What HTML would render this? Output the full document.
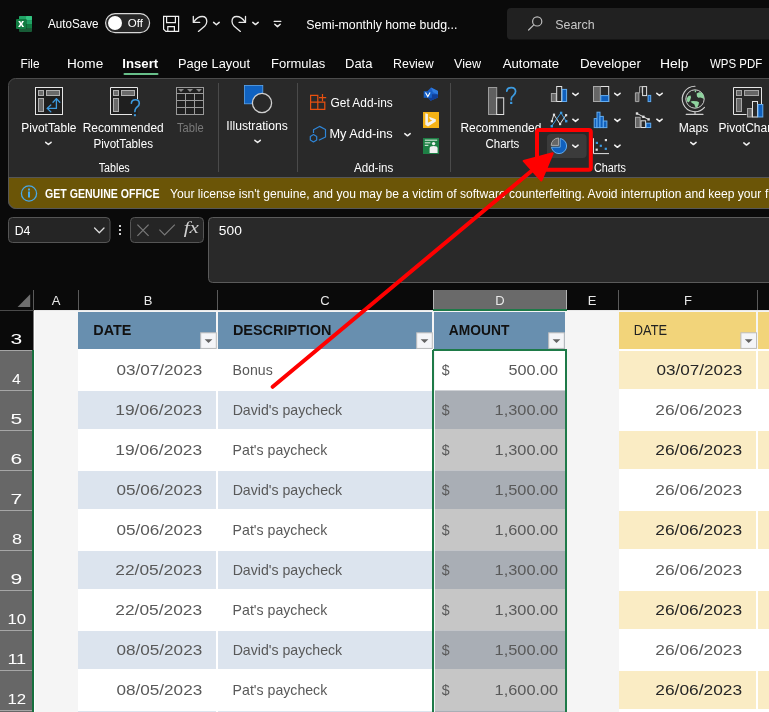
<!DOCTYPE html>
<html><head><meta charset="utf-8"><style>html,body{margin:0;padding:0;width:769px;height:712px;overflow:hidden;background:#0a0a0a}svg{display:block;will-change:transform}</style></head><body>
<svg width="769" height="712" viewBox="0 0 769 712">
<rect x="0" y="0" width="769" height="712" fill="#0a0a0a" />
<g>
<rect x="19" y="16" width="13" height="16" rx="1" fill="#185c37"/>
<rect x="19" y="16" width="13" height="4.3" rx="1" fill="#21a366"/>
<rect x="26" y="16" width="6" height="4.3" rx="1" fill="#33c481"/>
<rect x="19" y="20.2" width="13" height="4" fill="#21a366"/>
<rect x="19" y="24.1" width="13" height="4" fill="#107c41"/>
<rect x="16" y="18.9" width="10.8" height="10.2" rx="1" fill="#0b0b0b" opacity="0.35"/>
<rect x="16" y="18.9" width="10.2" height="10" rx="1" fill="#107c41"/>
<path d="M18.2 21H20.2L21.1 22.9L22 21H24L22.2 23.9L24.1 26.9H22.1L21.1 24.9L20.1 26.9H18.1L20 23.9Z" fill="#fff"/>
</g>
<text x="48.00" y="28" font-family="Liberation Sans" font-size="13" font-weight="normal" font-style="normal" fill="#ffffff" textLength="50.54" lengthAdjust="spacingAndGlyphs" xml:space="preserve">AutoSave</text>
<rect x="105.6" y="13.6" width="44" height="19" rx="9.5" fill="#262626" stroke="#d8d8d8" stroke-width="1.2"/>
<circle cx="115" cy="23" r="7" fill="#ffffff"/>
<text x="127.70" y="26.8" font-family="Liberation Sans" font-size="11" font-weight="normal" font-style="normal" fill="#ffffff" textLength="15.16" lengthAdjust="spacingAndGlyphs" xml:space="preserve">Off</text>
<g fill="none" stroke="#f0f0f0" stroke-width="1.2">
<path d="M163.6 16.4H178.6V31.4H165.8L163.6 29.2Z"/><path d="M166.6 16.4V22.6H175.4V16.4"/><path d="M167.8 31.4V26.6H174.4V31.4"/></g>
<g fill="none" stroke="#e8e8e8" stroke-width="1.3" stroke-linecap="round" stroke-linejoin="round">
<path d="M193.3 16.3V22.4H199.7"/><path d="M193.6 22.1C196 18.6 199.3 16.5 202.2 16.5C205 16.5 206.8 18.6 206.8 21.5C206.8 23.5 205.9 24.9 204.6 26.2L198.4 31.4"/>
<path d="M213.6 22.4L216.4 24.8L219.2 22.4" stroke-width="1.5"/>
<g transform="translate(438.8,0) scale(-1,1)"><path d="M193.3 16.3V22.4H199.7"/><path d="M193.6 22.1C196 18.6 199.3 16.5 202.2 16.5C205 16.5 206.8 18.6 206.8 21.5C206.8 23.5 205.9 24.9 204.6 26.2L198.4 31.4"/></g>
<path d="M252.8 22.4L255.5 24.6L258.2 22.4" stroke-width="1.5"/>
<path d="M274.2 21.4H280.8"/><path d="M274.8 24.2L277.5 26.6L280.2 24.2" stroke-width="1.5"/>
</g>
<text x="306.35" y="29" font-family="Liberation Sans" font-size="13" font-weight="normal" font-style="normal" fill="#ffffff" textLength="150.97" lengthAdjust="spacingAndGlyphs" xml:space="preserve">Semi-monthly home budg...</text>
<rect x="507" y="8" width="280" height="31.6" rx="4" fill="#212121"/>
<g fill="none" stroke="#bdbdbd" stroke-width="1.2" stroke-linecap="round"><circle cx="537.2" cy="21.4" r="4.6"/><path d="M533.8 24.8L528.6 30"/></g>
<text x="555.25" y="29" font-family="Liberation Sans" font-size="13" font-weight="normal" font-style="normal" fill="#c8c8c8" textLength="39.35" lengthAdjust="spacingAndGlyphs" xml:space="preserve">Search</text>
<text x="20.49" y="67.8" font-family="Liberation Sans" font-size="13" font-weight="normal" font-style="normal" fill="#ffffff" textLength="19.07" lengthAdjust="spacingAndGlyphs" xml:space="preserve">File</text>
<text x="66.95" y="67.8" font-family="Liberation Sans" font-size="13" font-weight="normal" font-style="normal" fill="#ffffff" textLength="36.26" lengthAdjust="spacingAndGlyphs" xml:space="preserve">Home</text>
<text x="122.29" y="67.8" font-family="Liberation Sans" font-size="13" font-weight="bold" font-style="normal" fill="#ffffff" textLength="35.93" lengthAdjust="spacingAndGlyphs" xml:space="preserve">Insert</text>
<text x="178.01" y="67.8" font-family="Liberation Sans" font-size="13" font-weight="normal" font-style="normal" fill="#ffffff" textLength="72.00" lengthAdjust="spacingAndGlyphs" xml:space="preserve">Page Layout</text>
<text x="271.00" y="67.8" font-family="Liberation Sans" font-size="13" font-weight="normal" font-style="normal" fill="#ffffff" textLength="54.19" lengthAdjust="spacingAndGlyphs" xml:space="preserve">Formulas</text>
<text x="345.00" y="67.8" font-family="Liberation Sans" font-size="13" font-weight="normal" font-style="normal" fill="#ffffff" textLength="27.47" lengthAdjust="spacingAndGlyphs" xml:space="preserve">Data</text>
<text x="393.05" y="67.8" font-family="Liberation Sans" font-size="13" font-weight="normal" font-style="normal" fill="#ffffff" textLength="40.60" lengthAdjust="spacingAndGlyphs" xml:space="preserve">Review</text>
<text x="454.00" y="67.8" font-family="Liberation Sans" font-size="13" font-weight="normal" font-style="normal" fill="#ffffff" textLength="26.95" lengthAdjust="spacingAndGlyphs" xml:space="preserve">View</text>
<text x="502.80" y="67.8" font-family="Liberation Sans" font-size="13" font-weight="normal" font-style="normal" fill="#ffffff" textLength="56.26" lengthAdjust="spacingAndGlyphs" xml:space="preserve">Automate</text>
<text x="579.97" y="67.8" font-family="Liberation Sans" font-size="13" font-weight="normal" font-style="normal" fill="#ffffff" textLength="60.90" lengthAdjust="spacingAndGlyphs" xml:space="preserve">Developer</text>
<text x="659.93" y="67.8" font-family="Liberation Sans" font-size="13" font-weight="normal" font-style="normal" fill="#ffffff" textLength="28.68" lengthAdjust="spacingAndGlyphs" xml:space="preserve">Help</text>
<text x="710.00" y="67.8" font-family="Liberation Sans" font-size="13" font-weight="normal" font-style="normal" fill="#ffffff" textLength="52.21" lengthAdjust="spacingAndGlyphs" xml:space="preserve">WPS PDF</text>
<rect x="123.5" y="73" width="35" height="2" rx="1" fill="#68c08a"/>
<rect x="8.5" y="78.5" width="800" height="130" rx="7" fill="#292929" stroke="#4c4c4c" stroke-width="1"/>
<path d="M8.5 177.5H800V208.5H16.5A8 8 0 0 1 8.5 200.5Z" fill="#6b5507" stroke="#565656" stroke-width="1"/>
<rect x="218.0" y="83" width="1" height="89" fill="#4a4a4a" />
<rect x="297.0" y="83" width="1" height="89" fill="#4a4a4a" />
<rect x="450.0" y="83" width="1" height="89" fill="#4a4a4a" />
<g transform="translate(35,87)"><rect x="0.5" y="0.5" width="27" height="27" fill="#1f1f1f" stroke="#e6e6e6" stroke-width="1"/><rect x="3.5" y="3.5" width="5" height="5" fill="#6a6a6a" stroke="#b0b0b0" stroke-width="1"/><rect x="11.5" y="3.5" width="13" height="5" fill="#6a6a6a" stroke="#b0b0b0" stroke-width="1"/><rect x="3.5" y="11.5" width="5" height="13" fill="#6a6a6a" stroke="#b0b0b0" stroke-width="1"/></g>
<g fill="none" stroke="#3d9be0" stroke-width="1.3" stroke-linecap="round" stroke-linejoin="round"><path d="M56.4 99V108.4H47.4"/><path d="M53 102.2L56.4 98.6L59.8 102.2"/><path d="M50.8 105L47.2 108.4L50.8 111.8"/></g>
<g transform="translate(110,87)"><rect x="0.5" y="0.5" width="27" height="27" fill="#1f1f1f"/><path d="M22 27.5H0.5V0.5H27.5V12" fill="none" stroke="#e6e6e6" stroke-width="1"/><rect x="3.5" y="3.5" width="5" height="5" fill="#6a6a6a" stroke="#b0b0b0" stroke-width="1"/><rect x="11.5" y="3.5" width="13" height="5" fill="#6a6a6a" stroke="#b0b0b0" stroke-width="1"/><rect x="3.5" y="11.5" width="5" height="13" fill="#6a6a6a" stroke="#b0b0b0" stroke-width="1"/></g>
<g fill="none" stroke="#3d9be0" stroke-width="1.6" stroke-linecap="round"><path d="M131.4 103.2C131.6 100.8 133.4 99.8 135.4 99.8C137.8 99.8 139.3 101.4 139.3 103.4C139.3 105.8 137.2 106.6 135.9 108.2C135.2 109 134.9 110 134.9 111.6"/></g><rect x="133.9" y="114.2" width="2" height="2" fill="#3d9be0"/>
<g fill="none" stroke="#9a9a9a" stroke-width="1">
<rect x="176.5" y="87.5" width="27" height="27" fill="#1f1f1f"/>
<path d="M176.5 93.5H203.5M176.5 100.5H203.5M176.5 107.5H203.5M185.5 93.5V114.5M194.5 93.5V114.5"/></g>
<g fill="#8a8a8a"><path d="M178 89H184L181 92Z"/><path d="M187 89H193L190 92Z"/><path d="M196 89H202L199 92Z"/></g>
<text x="21.30" y="132" font-family="Liberation Sans" font-size="12" font-weight="normal" font-style="normal" fill="#ffffff" textLength="55.17" lengthAdjust="spacingAndGlyphs" xml:space="preserve">PivotTable</text>
<text x="82.70" y="132" font-family="Liberation Sans" font-size="12" font-weight="normal" font-style="normal" fill="#ffffff" textLength="80.97" lengthAdjust="spacingAndGlyphs" xml:space="preserve">Recommended</text>
<text x="93.53" y="147.6" font-family="Liberation Sans" font-size="12" font-weight="normal" font-style="normal" fill="#ffffff" textLength="59.43" lengthAdjust="spacingAndGlyphs" xml:space="preserve">PivotTables</text>
<text x="177.00" y="132" font-family="Liberation Sans" font-size="12" font-weight="normal" font-style="normal" fill="#7a7a7a" textLength="26.64" lengthAdjust="spacingAndGlyphs" xml:space="preserve">Table</text>
<text x="98.70" y="171.8" font-family="Liberation Sans" font-size="12" font-weight="normal" font-style="normal" fill="#ffffff" textLength="31.02" lengthAdjust="spacingAndGlyphs" xml:space="preserve">Tables</text>
<path d="M45.70 142.30L48.40 144.50L51.10 142.30" fill="none" stroke="#f0f0f0" stroke-width="1.5" stroke-linecap="round" stroke-linejoin="round"/>
<rect x="244.4" y="85.4" width="18.4" height="18.4" fill="#1062c0" stroke="#5aa5ee" stroke-width="0.8"/>
<circle cx="262" cy="103" r="9.6" fill="#292929" stroke="#d0d0d0" stroke-width="1.3"/>
<text x="226.39" y="129.9" font-family="Liberation Sans" font-size="12" font-weight="normal" font-style="normal" fill="#ffffff" textLength="61.41" lengthAdjust="spacingAndGlyphs" xml:space="preserve">Illustrations</text>
<path d="M254.90 140.30L257.60 142.50L260.30 140.30" fill="none" stroke="#f0f0f0" stroke-width="1.5" stroke-linecap="round" stroke-linejoin="round"/>
<g fill="none" stroke="#e8500f" stroke-width="1.2">
<path d="M310.6 95.4H317.8V109.4H310.6Z"/><path d="M310.6 102.2H324.8V109.4H317.8"/>
<path d="M322.5 94V101.2M319 97.6H326.2"/></g>
<text x="330.50" y="107.2" font-family="Liberation Sans" font-size="12" font-weight="normal" font-style="normal" fill="#ffffff" textLength="62.21" lengthAdjust="spacingAndGlyphs" xml:space="preserve">Get Add-ins</text>
<g fill="none" stroke="#2f86d8" stroke-width="1.2" stroke-linejoin="round">
<path d="M313.5 133V129.8L319.5 126.4L325.5 129.5V137L318.8 140.3"/>
<path d="M313.5 134.6L316.7 136.4V140.1L313.5 141.9L310.3 140.1V136.4Z"/></g>
<text x="329.43" y="138.4" font-family="Liberation Sans" font-size="12" font-weight="normal" font-style="normal" fill="#ffffff" textLength="63.25" lengthAdjust="spacingAndGlyphs" xml:space="preserve">My Add-ins</text>
<path d="M404.80 133.60L407.50 135.80L410.20 133.60" fill="none" stroke="#f0f0f0" stroke-width="1.5" stroke-linecap="round" stroke-linejoin="round"/>
<g><path d="M431 87.6L438 91V97.5L430.6 100.8L427.6 97.2V91Z" fill="#1c5fc8"/>
<path d="M427.6 94.2H438V97.5L430.6 100.8L427.6 97.2Z" fill="#103f98"/>
<path d="M431 87.6L438 91V94.4L433 92.2Z" fill="#2f7ce0"/>
<rect x="423.7" y="91.2" width="8.2" height="6.6" fill="#1660c8"/>
<path d="M425.5 92.6L427.8 96.6L430.1 92.6" fill="none" stroke="#fff" stroke-width="1.1"/></g>
<rect x="423" y="112" width="16" height="16" fill="#f4b216"/>
<path d="M425.3 113.2L427.9 114.1V122.8L432.2 120.4L430.2 119.5L429 116.8L435.8 119.2V121.6L428 126.4L425.3 124.8Z" fill="#f2f0ea"/>
<rect x="423" y="138" width="16" height="16" fill="#1e7f45"/>
<g fill="#c8e0cf"><rect x="424.8" y="139.6" width="12.4" height="1.2"/><rect x="424.8" y="142.2" width="5.6" height="1.2"/><rect x="424.8" y="144.8" width="3.6" height="1.2"/></g>
<g fill="#f0f0f0"><circle cx="433.6" cy="143.6" r="1.7"/><path d="M429.6 153V148.4C429.6 146.9 431 146.1 433.6 146.1C436.2 146.1 437.6 146.9 437.6 148.4V153Z"/></g>
<text x="354.00" y="171.8" font-family="Liberation Sans" font-size="12" font-weight="normal" font-style="normal" fill="#ffffff" textLength="39.30" lengthAdjust="spacingAndGlyphs" xml:space="preserve">Add-ins</text>
<rect x="488.5" y="87.5" width="8.2" height="27" fill="#606060" stroke="#9c9c9c" stroke-width="1"/>
<rect x="496.7" y="97.8" width="7" height="16.7" fill="#292929" stroke="#e0e0e0" stroke-width="1"/>
<g fill="none" stroke="#3d9be0" stroke-width="1.7" stroke-linecap="round"><path d="M506.8 91.2C507 88.8 508.8 87.6 511.2 87.6C513.9 87.6 515.6 89.2 515.6 91.6C515.6 94.2 513.4 95.2 512.2 96.6C511.6 97.4 511.2 98.4 511.2 99.8"/></g><rect x="510.1" y="101.8" width="2.2" height="2.2" fill="#3d9be0"/>
<text x="460.40" y="131.8" font-family="Liberation Sans" font-size="12" font-weight="normal" font-style="normal" fill="#ffffff" textLength="80.97" lengthAdjust="spacingAndGlyphs" xml:space="preserve">Recommended</text>
<text x="485.50" y="148" font-family="Liberation Sans" font-size="12" font-weight="normal" font-style="normal" fill="#ffffff" textLength="33.83" lengthAdjust="spacingAndGlyphs" xml:space="preserve">Charts</text>
<rect x="547" y="134" width="39.6" height="24" rx="4" fill="#3b3b3b"/>
<g stroke-width="1">
<rect x="551.4" y="93.5" width="4.8" height="8" fill="#666" stroke="#a8a8a8"/>
<rect x="556.7" y="86.5" width="5" height="15" fill="#292929" stroke="#e2e2e2"/>
<rect x="562.2" y="89.4" width="4.4" height="12.1" fill="#1060bd" stroke="#62acf0"/></g>
<g stroke-width="1">
<rect x="593.5" y="86.5" width="15.2" height="15" fill="#292929" stroke="#e2e2e2"/>
<rect x="593.5" y="86.5" width="6.8" height="15" fill="#666" stroke="#a8a8a8"/>
<rect x="600.8" y="95.6" width="7.9" height="5.9" fill="#1060bd" stroke="#62acf0"/></g>
<g stroke-width="1">
<path d="M635.4 101.6V92.8H638.9V101.6Z" fill="#666" stroke="#a8a8a8"/>
<path d="M638.9 92.8H639.6V86.6H642.2V92.8" fill="none" stroke="#a8a8a8"/>
<rect x="642.6" y="86.6" width="4" height="9" fill="#292929" stroke="#e2e2e2"/>
<rect x="648.1" y="95.4" width="2.6" height="6.2" fill="#1060bd" stroke="#62acf0"/></g>
<g fill="none" stroke-width="1" stroke-linejoin="round">
<path d="M551.8 121.1L553.9 114.6L560 124L566 115.1" stroke="#e2e2e2"/>
<path d="M551.8 126L561 112.8L566 121.1" stroke="#3d9be0"/></g>
<g fill="#e2e2e2"><rect x="550.8" y="120.1" width="2.2" height="2.2"/><rect x="552.9" y="113.6" width="2.2" height="2.2"/><rect x="559" y="123" width="2.2" height="2.2"/><rect x="565" y="114.1" width="2.2" height="2.2"/></g>
<g fill="#3d9be0"><rect x="550.6" y="125" width="2.4" height="2.4"/><rect x="559.9" y="111.7" width="2.4" height="2.4"/><rect x="565" y="120" width="2.4" height="2.4"/></g>
<g stroke-width="1" fill="#1060bd" stroke="#62acf0">
<rect x="594.2" y="118.6" width="2.8" height="9"/><rect x="597" y="112.2" width="3" height="15.4"/><rect x="600" y="116.4" width="3.3" height="11.2"/><rect x="603.3" y="121" width="3.6" height="6.6"/></g>
<g stroke-width="1">
<rect x="635.5" y="117.3" width="4.6" height="10.2" fill="#666" stroke="#a8a8a8"/>
<rect x="641" y="120.8" width="4.6" height="6.7" fill="#292929" stroke="#e2e2e2"/>
<rect x="646.3" y="123.2" width="4.4" height="4.3" fill="#1060bd" stroke="#62acf0"/>
<path d="M637 113.5L643.4 116.8L648.6 119.4" fill="none" stroke="#e2e2e2" stroke-width="1"/>
<rect x="635.8" y="112.3" width="2.4" height="2.4" fill="#e2e2e2" stroke="none"/><rect x="642.2" y="115.6" width="2.4" height="2.4" fill="#e2e2e2" stroke="none"/><rect x="647.4" y="118.2" width="2.4" height="2.4" fill="#e2e2e2" stroke="none"/></g>
<defs><clipPath id="pc"><path d="M540 130H580V160H540V147.2H560.2V130Z"/></clipPath></defs>
<circle cx="559" cy="146" r="7.6" fill="#1060bd" stroke="#62acf0" stroke-width="1" clip-path="url(#pc)"/>
<path d="M560.2 138.4V147.2H551.4" fill="none" stroke="#62acf0" stroke-width="1"/>
<path d="M558.6 138A7.4 7.4 0 0 0 551.2 145.4H558.6Z" fill="#666" stroke="#a8a8a8" stroke-width="1"/>
<g><path d="M593.5 138.2V153.6H609" fill="none" stroke="#e2e2e2" stroke-width="1"/>
<rect x="604.8" y="139" width="2.2" height="2.2" fill="#e2e2e2"/><rect x="595.6" y="148.6" width="2.2" height="2.2" fill="#e2e2e2"/>
<rect x="595.8" y="141.8" width="2.2" height="2.2" fill="#3d9be0"/><rect x="599.7" y="144.7" width="2.2" height="2.2" fill="#3d9be0"/><rect x="604.7" y="147.7" width="2.2" height="2.2" fill="#3d9be0"/></g>
<path d="M572.80 93.30L575.50 95.50L578.20 93.30" fill="none" stroke="#f0f0f0" stroke-width="1.5" stroke-linecap="round" stroke-linejoin="round"/>
<path d="M572.80 119.20L575.50 121.40L578.20 119.20" fill="none" stroke="#f0f0f0" stroke-width="1.5" stroke-linecap="round" stroke-linejoin="round"/>
<path d="M614.70 93.30L617.40 95.50L620.10 93.30" fill="none" stroke="#f0f0f0" stroke-width="1.5" stroke-linecap="round" stroke-linejoin="round"/>
<path d="M614.70 119.20L617.40 121.40L620.10 119.20" fill="none" stroke="#f0f0f0" stroke-width="1.5" stroke-linecap="round" stroke-linejoin="round"/>
<path d="M656.80 93.30L659.50 95.50L662.20 93.30" fill="none" stroke="#f0f0f0" stroke-width="1.5" stroke-linecap="round" stroke-linejoin="round"/>
<path d="M656.80 119.20L659.50 121.40L662.20 119.20" fill="none" stroke="#f0f0f0" stroke-width="1.5" stroke-linecap="round" stroke-linejoin="round"/>
<path d="M572.70 145.10L575.40 147.30L578.10 145.10" fill="none" stroke="#f0f0f0" stroke-width="1.5" stroke-linecap="round" stroke-linejoin="round"/>
<path d="M614.70 145.10L617.40 147.30L620.10 145.10" fill="none" stroke="#f0f0f0" stroke-width="1.5" stroke-linecap="round" stroke-linejoin="round"/>
<text x="594.00" y="171.8" font-family="Liberation Sans" font-size="12" font-weight="normal" font-style="normal" fill="#ffffff" textLength="31.81" lengthAdjust="spacingAndGlyphs" xml:space="preserve">Charts</text>
<g fill="none" stroke="#d0d0d0" stroke-width="1.1" stroke-linecap="round">
<path d="M695 86.3A12.7 12.7 0 1 0 704.5 107.4"/>
<path d="M695 111.8V114.4M686.2 114.4H703"/></g>
<circle cx="695" cy="99" r="9.2" fill="#2a2a2a" stroke="#d0d0d0" stroke-width="1"/>
<g fill="#8fd39f"><path d="M686.6 98.5L688.5 96L690.6 95.4L691 97.5L690 100.5L689 102L687.8 102.6C687 101.4 686.6 100 686.6 98.5Z"/>
<path d="M696.6 93.6L699 92.2L701.5 92.6L703.2 94.5L704 97L703.8 99L702 98L700.2 97.4L698.3 97.8L697 96.6Z"/>
<path d="M694.5 90.6L696 90.2L696.2 91.8L695 92.4Z"/>
<path d="M690.5 101.5L693 101L697 101.2L699 102.2L698.6 104.8L697.2 107.4L695.6 107.8L694.3 104.2L692 103Z"/></g>
<text x="678.69" y="131.5" font-family="Liberation Sans" font-size="12" font-weight="normal" font-style="normal" fill="#ffffff" textLength="29.66" lengthAdjust="spacingAndGlyphs" xml:space="preserve">Maps</text>
<path d="M690.70 142.40L693.40 144.60L696.10 142.40" fill="none" stroke="#f0f0f0" stroke-width="1.5" stroke-linecap="round" stroke-linejoin="round"/>
<g stroke-width="1">
<path d="M746.5 114.5H733.5V87.5H761.5V104" fill="none" stroke="#e6e6e6"/>
<rect x="736.5" y="90.5" width="5" height="5" fill="#666" stroke="#a8a8a8"/>
<rect x="744.5" y="90.5" width="14" height="5" fill="#666" stroke="#a8a8a8"/>
<rect x="736.5" y="98.5" width="5" height="13" fill="#666" stroke="#a8a8a8"/>
<rect x="747.5" y="108.5" width="4.5" height="8.5" fill="#666" stroke="#a8a8a8"/>
<rect x="752.5" y="101.5" width="5" height="15.5" fill="#292929" stroke="#e2e2e2"/>
<rect x="758" y="104.5" width="4.8" height="12.5" fill="#1060bd" stroke="#62acf0"/>
</g>
<text x="718.50" y="131.5" font-family="Liberation Sans" font-size="12" font-weight="normal" font-style="normal" fill="#ffffff" xml:space="preserve">PivotChart</text>
<path d="M743.80 142.90L746.50 145.10L749.20 142.90" fill="none" stroke="#f0f0f0" stroke-width="1.5" stroke-linecap="round" stroke-linejoin="round"/>
<circle cx="29" cy="193.5" r="7.6" fill="none" stroke="#4aa8e6" stroke-width="1.3"/><rect x="28" y="191.5" width="2" height="6" fill="#4aa8e6"/><rect x="28" y="188.5" width="2" height="2" fill="#4aa8e6"/>
<text x="45.00" y="197.6" font-family="Liberation Sans" font-size="12" font-weight="bold" font-style="normal" fill="#ffffff" textLength="114.51" lengthAdjust="spacingAndGlyphs" xml:space="preserve">GET GENUINE OFFICE</text>
<text x="170.00" y="197.6" font-family="Liberation Sans" font-size="12" font-weight="normal" font-style="normal" fill="#ffffff" textLength="591.31" lengthAdjust="spacingAndGlyphs" xml:space="preserve">Your license isn't genuine, and you may be a victim of software counterfeiting. Avoid interruption and keep your</text>
<text x="765.00" y="197.6" font-family="Liberation Sans" font-size="12" font-weight="normal" font-style="normal" fill="#ffffff" xml:space="preserve">f</text>
<rect x="8.5" y="217.5" width="101.5" height="25" rx="4" fill="#252525" stroke="#555" stroke-width="1"/>
<text x="14.76" y="235.1" font-family="Liberation Sans" font-size="13" font-weight="normal" font-style="normal" fill="#ffffff" textLength="15.69" lengthAdjust="spacingAndGlyphs" xml:space="preserve">D4</text>
<path d="M94.6 228L99.3 232.7L104 228" fill="none" stroke="#dcdcdc" stroke-width="1.3" stroke-linecap="round" stroke-linejoin="round"/>
<rect x="119" y="225" width="2" height="2" fill="#d0d0d0"/>
<rect x="119" y="229" width="2" height="2" fill="#d0d0d0"/>
<rect x="119" y="233" width="2" height="2" fill="#d0d0d0"/>
<rect x="130.5" y="217.5" width="73" height="25" rx="4" fill="#252525" stroke="#555" stroke-width="1"/>
<path d="M137.4 224.6L148.6 235.8M148.6 224.6L137.4 235.8" fill="none" stroke="#7a7a7a" stroke-width="1.2"/>
<path d="M159.4 229.6L164.6 234.8L174.8 224.6" fill="none" stroke="#7a7a7a" stroke-width="1.2"/>
<text x="183.70" y="233.4" font-family="Liberation Serif" font-size="17" font-weight="normal" font-style="italic" fill="#d0d0d0" textLength="15.15" lengthAdjust="spacingAndGlyphs" xml:space="preserve">fx</text>
<rect x="208.5" y="217.5" width="600" height="65" rx="4" fill="#292929" stroke="#5a5a5a" stroke-width="1"/>
<text x="218.84" y="235.1" font-family="Liberation Sans" font-size="13" font-weight="normal" font-style="normal" fill="#ffffff" textLength="23.01" lengthAdjust="spacingAndGlyphs" xml:space="preserve">500</text>
<rect x="34" y="311" width="735" height="401" fill="#f5f5f5" />
<rect x="0" y="290" width="769" height="20" fill="#0a0a0a" />
<rect x="0" y="310" width="34" height="1" fill="#4a4a4a" />
<rect x="34" y="310" width="735" height="1" fill="#e8e8e8" />
<rect x="0" y="311" width="33" height="401" fill="#0a0a0a" />
<rect x="0" y="351" width="33" height="40" fill="#676767" />
<rect x="0" y="350" width="33" height="1" fill="#a6a6a6" />
<rect x="0" y="391" width="33" height="40" fill="#676767" />
<rect x="0" y="390" width="33" height="1" fill="#a6a6a6" />
<rect x="0" y="431" width="33" height="40" fill="#676767" />
<rect x="0" y="430" width="33" height="1" fill="#a6a6a6" />
<rect x="0" y="471" width="33" height="40" fill="#676767" />
<rect x="0" y="470" width="33" height="1" fill="#a6a6a6" />
<rect x="0" y="511" width="33" height="40" fill="#676767" />
<rect x="0" y="510" width="33" height="1" fill="#a6a6a6" />
<rect x="0" y="551" width="33" height="40" fill="#676767" />
<rect x="0" y="550" width="33" height="1" fill="#a6a6a6" />
<rect x="0" y="591" width="33" height="40" fill="#676767" />
<rect x="0" y="590" width="33" height="1" fill="#a6a6a6" />
<rect x="0" y="631" width="33" height="40" fill="#676767" />
<rect x="0" y="630" width="33" height="1" fill="#a6a6a6" />
<rect x="0" y="671" width="33" height="40" fill="#676767" />
<rect x="0" y="670" width="33" height="1" fill="#a6a6a6" />
<rect x="0" y="711" width="33" height="40" fill="#676767" />
<rect x="0" y="710" width="33" height="1" fill="#a6a6a6" />
<rect x="33" y="311" width="1" height="40" fill="#7a7a7a" />
<rect x="34" y="311" width="1" height="401" fill="#ffffff" />
<rect x="32" y="350" width="2" height="362" fill="#17703e" />
<rect x="33" y="290" width="1" height="20" fill="#5a5a5a" />
<rect x="78" y="290" width="1" height="20" fill="#5a5a5a" />
<rect x="217" y="290" width="1" height="20" fill="#5a5a5a" />
<rect x="433" y="290" width="1" height="20" fill="#5a5a5a" />
<rect x="566" y="290" width="1" height="20" fill="#5a5a5a" />
<rect x="618" y="290" width="1" height="20" fill="#5a5a5a" />
<rect x="757" y="290" width="1" height="20" fill="#5a5a5a" />
<rect x="433" y="290" width="134" height="20" fill="#6a6a6a" />
<rect x="433" y="290" width="1" height="20" fill="#b4b4b4" />
<rect x="566" y="290" width="1" height="20" fill="#b4b4b4" />
<rect x="433" y="309" width="134" height="2" fill="#1e7a48" />
<path d="M30.2 294.2V307H17.6Z" fill="#6e6e6e"/>
<text x="56" y="304.7" font-family="Liberation Sans" font-size="13" fill="#e8e8e8" text-anchor="middle">A</text>
<text x="148" y="304.7" font-family="Liberation Sans" font-size="13" fill="#e8e8e8" text-anchor="middle">B</text>
<text x="325" y="304.7" font-family="Liberation Sans" font-size="13" fill="#e8e8e8" text-anchor="middle">C</text>
<text x="500" y="304.7" font-family="Liberation Sans" font-size="13" fill="#e8e8e8" text-anchor="middle">D</text>
<text x="592" y="304.7" font-family="Liberation Sans" font-size="13" fill="#e8e8e8" text-anchor="middle">E</text>
<text x="688" y="304.7" font-family="Liberation Sans" font-size="13" fill="#e8e8e8" text-anchor="middle">F</text>
<rect x="78" y="312" width="138" height="37" fill="#688faf" />
<rect x="218" y="312" width="214" height="37" fill="#688faf" />
<rect x="434" y="312" width="131" height="37" fill="#688faf" />
<rect x="78" y="349" width="355" height="2" fill="#ffffff" />
<rect x="78" y="351" width="355" height="40" fill="#ffffff" />
<rect x="435" y="351" width="130" height="39" fill="#ffffff" />
<rect x="619" y="349" width="150" height="42" fill="#ffffff" />
<rect x="619" y="351" width="137" height="38" fill="#faecc4" />
<rect x="758" y="351" width="11" height="38" fill="#faecc4" />
<rect x="78" y="389" width="355" height="42" fill="#ffffff" />
<rect x="78" y="391" width="138" height="38" fill="#dce4ee" />
<rect x="218" y="391" width="214" height="38" fill="#dce4ee" />
<rect x="435" y="390.5" width="130" height="38.5" fill="#a9aeb5" />
<rect x="619" y="391" width="150" height="40" fill="#ffffff" />
<rect x="78" y="431" width="355" height="40" fill="#ffffff" />
<rect x="435" y="429" width="130" height="41.5" fill="#c6c6c6" />
<rect x="619" y="429" width="150" height="42" fill="#ffffff" />
<rect x="619" y="431" width="137" height="38" fill="#faecc4" />
<rect x="758" y="431" width="11" height="38" fill="#faecc4" />
<rect x="78" y="469" width="355" height="42" fill="#ffffff" />
<rect x="78" y="471" width="138" height="38" fill="#dce4ee" />
<rect x="218" y="471" width="214" height="38" fill="#dce4ee" />
<rect x="435" y="470.5" width="130" height="38.5" fill="#a9aeb5" />
<rect x="619" y="471" width="150" height="40" fill="#ffffff" />
<rect x="78" y="511" width="355" height="40" fill="#ffffff" />
<rect x="435" y="509" width="130" height="41.5" fill="#c6c6c6" />
<rect x="619" y="509" width="150" height="42" fill="#ffffff" />
<rect x="619" y="511" width="137" height="38" fill="#faecc4" />
<rect x="758" y="511" width="11" height="38" fill="#faecc4" />
<rect x="78" y="549" width="355" height="42" fill="#ffffff" />
<rect x="78" y="551" width="138" height="38" fill="#dce4ee" />
<rect x="218" y="551" width="214" height="38" fill="#dce4ee" />
<rect x="435" y="550.5" width="130" height="38.5" fill="#a9aeb5" />
<rect x="619" y="551" width="150" height="40" fill="#ffffff" />
<rect x="78" y="591" width="355" height="40" fill="#ffffff" />
<rect x="435" y="589" width="130" height="41.5" fill="#c6c6c6" />
<rect x="619" y="589" width="150" height="42" fill="#ffffff" />
<rect x="619" y="591" width="137" height="38" fill="#faecc4" />
<rect x="758" y="591" width="11" height="38" fill="#faecc4" />
<rect x="78" y="629" width="355" height="42" fill="#ffffff" />
<rect x="78" y="631" width="138" height="38" fill="#dce4ee" />
<rect x="218" y="631" width="214" height="38" fill="#dce4ee" />
<rect x="435" y="630.5" width="130" height="38.5" fill="#a9aeb5" />
<rect x="619" y="631" width="150" height="40" fill="#ffffff" />
<rect x="78" y="671" width="355" height="40" fill="#ffffff" />
<rect x="435" y="669" width="130" height="41.5" fill="#c6c6c6" />
<rect x="619" y="669" width="150" height="42" fill="#ffffff" />
<rect x="619" y="671" width="137" height="38" fill="#faecc4" />
<rect x="758" y="671" width="11" height="38" fill="#faecc4" />
<rect x="78" y="709" width="355" height="42" fill="#ffffff" />
<rect x="78" y="711" width="138" height="38" fill="#dce4ee" />
<rect x="218" y="711" width="214" height="38" fill="#dce4ee" />
<rect x="435" y="710.5" width="130" height="38.5" fill="#a9aeb5" />
<rect x="619" y="711" width="150" height="40" fill="#ffffff" />
<rect x="619" y="312" width="137" height="37" fill="#f2d47a" />
<rect x="758" y="312" width="11" height="37" fill="#f2d47a" />
<rect x="619" y="349" width="150" height="2" fill="#ffffff" />
<rect x="200.7" y="332.8" width="15.6" height="15.6" fill="#f4f5f8" stroke="#bdbdbd" stroke-width="1"/><path d="M204.6 339.3H212.39999999999998L208.5 343.1Z" fill="#636363"/>
<rect x="416.7" y="332.8" width="15.6" height="15.6" fill="#f4f5f8" stroke="#bdbdbd" stroke-width="1"/><path d="M420.59999999999997 339.3H428.4L424.5 343.1Z" fill="#636363"/>
<rect x="548.7" y="332.8" width="15.6" height="15.6" fill="#f4f5f8" stroke="#bdbdbd" stroke-width="1"/><path d="M552.6 339.3H560.4000000000001L556.5 343.1Z" fill="#636363"/>
<rect x="740.9" y="332.8" width="15.6" height="15.6" fill="#f4f5f8" stroke="#bdbdbd" stroke-width="1"/><path d="M744.8 339.3H752.6L748.6999999999999 343.1Z" fill="#636363"/>
<path d="M433 350H566V712M433 350V712" fill="none" stroke="#1e7a48" stroke-width="2"/>
<text x="93.31" y="335.2" font-family="Liberation Sans" font-size="14.5" font-weight="bold" font-style="normal" fill="#111" textLength="38.09" lengthAdjust="spacingAndGlyphs" xml:space="preserve">DATE</text>
<text x="232.91" y="335.2" font-family="Liberation Sans" font-size="14.5" font-weight="bold" font-style="normal" fill="#111" textLength="98.58" lengthAdjust="spacingAndGlyphs" xml:space="preserve">DESCRIPTION</text>
<text x="448.80" y="335.2" font-family="Liberation Sans" font-size="14.5" font-weight="bold" font-style="normal" fill="#111" textLength="60.56" lengthAdjust="spacingAndGlyphs" xml:space="preserve">AMOUNT</text>
<text x="633.82" y="335.2" font-family="Liberation Sans" font-size="14.5" font-weight="normal" font-style="normal" fill="#222" textLength="33.22" lengthAdjust="spacingAndGlyphs" xml:space="preserve">DATE</text>
<text x="116.50" y="375" font-family="Liberation Sans" font-size="14.5" font-weight="normal" font-style="normal" fill="#595959" textLength="85.68" lengthAdjust="spacingAndGlyphs" xml:space="preserve">03/07/2023</text>
<text x="232.62" y="375" font-family="Liberation Sans" font-size="14.5" font-weight="normal" font-style="normal" fill="#595959" textLength="40.10" lengthAdjust="spacingAndGlyphs" xml:space="preserve">Bonus</text>
<text x="441.70" y="375" font-family="Liberation Sans" font-size="14.5" font-weight="normal" font-style="normal" fill="#595959" textLength="7.88" lengthAdjust="spacingAndGlyphs" xml:space="preserve">$</text>
<text x="508.58" y="375" font-family="Liberation Sans" font-size="14.5" font-weight="normal" font-style="normal" fill="#595959" textLength="49.52" lengthAdjust="spacingAndGlyphs" xml:space="preserve">500.00</text>
<text x="656.50" y="375" font-family="Liberation Sans" font-size="14.5" font-weight="normal" font-style="normal" fill="#262626" textLength="85.68" lengthAdjust="spacingAndGlyphs" xml:space="preserve">03/07/2023</text>
<text x="115.30" y="415" font-family="Liberation Sans" font-size="14.5" font-weight="normal" font-style="normal" fill="#595959" textLength="86.89" lengthAdjust="spacingAndGlyphs" xml:space="preserve">19/06/2023</text>
<text x="232.63" y="415" font-family="Liberation Sans" font-size="14.5" font-weight="normal" font-style="normal" fill="#595959" textLength="109.54" lengthAdjust="spacingAndGlyphs" xml:space="preserve">David's paycheck</text>
<text x="441.70" y="415" font-family="Liberation Sans" font-size="14.5" font-weight="normal" font-style="normal" fill="#595959" textLength="7.88" lengthAdjust="spacingAndGlyphs" xml:space="preserve">$</text>
<text x="494.57" y="415" font-family="Liberation Sans" font-size="14.5" font-weight="normal" font-style="normal" fill="#595959" textLength="63.64" lengthAdjust="spacingAndGlyphs" xml:space="preserve">1,300.00</text>
<text x="655.30" y="415" font-family="Liberation Sans" font-size="14.5" font-weight="normal" font-style="normal" fill="#595959" textLength="86.89" lengthAdjust="spacingAndGlyphs" xml:space="preserve">26/06/2023</text>
<text x="115.30" y="455" font-family="Liberation Sans" font-size="14.5" font-weight="normal" font-style="normal" fill="#595959" textLength="86.89" lengthAdjust="spacingAndGlyphs" xml:space="preserve">19/06/2023</text>
<text x="232.62" y="455" font-family="Liberation Sans" font-size="14.5" font-weight="normal" font-style="normal" fill="#595959" textLength="94.65" lengthAdjust="spacingAndGlyphs" xml:space="preserve">Pat's paycheck</text>
<text x="441.70" y="455" font-family="Liberation Sans" font-size="14.5" font-weight="normal" font-style="normal" fill="#595959" textLength="7.88" lengthAdjust="spacingAndGlyphs" xml:space="preserve">$</text>
<text x="494.57" y="455" font-family="Liberation Sans" font-size="14.5" font-weight="normal" font-style="normal" fill="#595959" textLength="63.64" lengthAdjust="spacingAndGlyphs" xml:space="preserve">1,300.00</text>
<text x="655.30" y="455" font-family="Liberation Sans" font-size="14.5" font-weight="normal" font-style="normal" fill="#262626" textLength="86.89" lengthAdjust="spacingAndGlyphs" xml:space="preserve">26/06/2023</text>
<text x="116.50" y="495" font-family="Liberation Sans" font-size="14.5" font-weight="normal" font-style="normal" fill="#595959" textLength="85.68" lengthAdjust="spacingAndGlyphs" xml:space="preserve">05/06/2023</text>
<text x="232.63" y="495" font-family="Liberation Sans" font-size="14.5" font-weight="normal" font-style="normal" fill="#595959" textLength="109.54" lengthAdjust="spacingAndGlyphs" xml:space="preserve">David's paycheck</text>
<text x="441.70" y="495" font-family="Liberation Sans" font-size="14.5" font-weight="normal" font-style="normal" fill="#595959" textLength="7.88" lengthAdjust="spacingAndGlyphs" xml:space="preserve">$</text>
<text x="494.57" y="495" font-family="Liberation Sans" font-size="14.5" font-weight="normal" font-style="normal" fill="#595959" textLength="63.64" lengthAdjust="spacingAndGlyphs" xml:space="preserve">1,500.00</text>
<text x="655.30" y="495" font-family="Liberation Sans" font-size="14.5" font-weight="normal" font-style="normal" fill="#595959" textLength="86.89" lengthAdjust="spacingAndGlyphs" xml:space="preserve">26/06/2023</text>
<text x="116.50" y="535" font-family="Liberation Sans" font-size="14.5" font-weight="normal" font-style="normal" fill="#595959" textLength="85.68" lengthAdjust="spacingAndGlyphs" xml:space="preserve">05/06/2023</text>
<text x="232.62" y="535" font-family="Liberation Sans" font-size="14.5" font-weight="normal" font-style="normal" fill="#595959" textLength="94.65" lengthAdjust="spacingAndGlyphs" xml:space="preserve">Pat's paycheck</text>
<text x="441.70" y="535" font-family="Liberation Sans" font-size="14.5" font-weight="normal" font-style="normal" fill="#595959" textLength="7.88" lengthAdjust="spacingAndGlyphs" xml:space="preserve">$</text>
<text x="494.57" y="535" font-family="Liberation Sans" font-size="14.5" font-weight="normal" font-style="normal" fill="#595959" textLength="63.64" lengthAdjust="spacingAndGlyphs" xml:space="preserve">1,600.00</text>
<text x="655.30" y="535" font-family="Liberation Sans" font-size="14.5" font-weight="normal" font-style="normal" fill="#262626" textLength="86.89" lengthAdjust="spacingAndGlyphs" xml:space="preserve">26/06/2023</text>
<text x="115.30" y="575" font-family="Liberation Sans" font-size="14.5" font-weight="normal" font-style="normal" fill="#595959" textLength="86.89" lengthAdjust="spacingAndGlyphs" xml:space="preserve">22/05/2023</text>
<text x="232.63" y="575" font-family="Liberation Sans" font-size="14.5" font-weight="normal" font-style="normal" fill="#595959" textLength="109.54" lengthAdjust="spacingAndGlyphs" xml:space="preserve">David's paycheck</text>
<text x="441.70" y="575" font-family="Liberation Sans" font-size="14.5" font-weight="normal" font-style="normal" fill="#595959" textLength="7.88" lengthAdjust="spacingAndGlyphs" xml:space="preserve">$</text>
<text x="494.57" y="575" font-family="Liberation Sans" font-size="14.5" font-weight="normal" font-style="normal" fill="#595959" textLength="63.64" lengthAdjust="spacingAndGlyphs" xml:space="preserve">1,300.00</text>
<text x="655.30" y="575" font-family="Liberation Sans" font-size="14.5" font-weight="normal" font-style="normal" fill="#595959" textLength="86.89" lengthAdjust="spacingAndGlyphs" xml:space="preserve">26/06/2023</text>
<text x="115.30" y="615" font-family="Liberation Sans" font-size="14.5" font-weight="normal" font-style="normal" fill="#595959" textLength="86.89" lengthAdjust="spacingAndGlyphs" xml:space="preserve">22/05/2023</text>
<text x="232.62" y="615" font-family="Liberation Sans" font-size="14.5" font-weight="normal" font-style="normal" fill="#595959" textLength="94.65" lengthAdjust="spacingAndGlyphs" xml:space="preserve">Pat's paycheck</text>
<text x="441.70" y="615" font-family="Liberation Sans" font-size="14.5" font-weight="normal" font-style="normal" fill="#595959" textLength="7.88" lengthAdjust="spacingAndGlyphs" xml:space="preserve">$</text>
<text x="494.57" y="615" font-family="Liberation Sans" font-size="14.5" font-weight="normal" font-style="normal" fill="#595959" textLength="63.64" lengthAdjust="spacingAndGlyphs" xml:space="preserve">1,300.00</text>
<text x="655.30" y="615" font-family="Liberation Sans" font-size="14.5" font-weight="normal" font-style="normal" fill="#262626" textLength="86.89" lengthAdjust="spacingAndGlyphs" xml:space="preserve">26/06/2023</text>
<text x="116.50" y="655" font-family="Liberation Sans" font-size="14.5" font-weight="normal" font-style="normal" fill="#595959" textLength="85.68" lengthAdjust="spacingAndGlyphs" xml:space="preserve">08/05/2023</text>
<text x="232.63" y="655" font-family="Liberation Sans" font-size="14.5" font-weight="normal" font-style="normal" fill="#595959" textLength="109.54" lengthAdjust="spacingAndGlyphs" xml:space="preserve">David's paycheck</text>
<text x="441.70" y="655" font-family="Liberation Sans" font-size="14.5" font-weight="normal" font-style="normal" fill="#595959" textLength="7.88" lengthAdjust="spacingAndGlyphs" xml:space="preserve">$</text>
<text x="494.57" y="655" font-family="Liberation Sans" font-size="14.5" font-weight="normal" font-style="normal" fill="#595959" textLength="63.64" lengthAdjust="spacingAndGlyphs" xml:space="preserve">1,500.00</text>
<text x="655.30" y="655" font-family="Liberation Sans" font-size="14.5" font-weight="normal" font-style="normal" fill="#595959" textLength="86.89" lengthAdjust="spacingAndGlyphs" xml:space="preserve">26/06/2023</text>
<text x="116.50" y="695" font-family="Liberation Sans" font-size="14.5" font-weight="normal" font-style="normal" fill="#595959" textLength="85.68" lengthAdjust="spacingAndGlyphs" xml:space="preserve">08/05/2023</text>
<text x="232.62" y="695" font-family="Liberation Sans" font-size="14.5" font-weight="normal" font-style="normal" fill="#595959" textLength="94.65" lengthAdjust="spacingAndGlyphs" xml:space="preserve">Pat's paycheck</text>
<text x="441.70" y="695" font-family="Liberation Sans" font-size="14.5" font-weight="normal" font-style="normal" fill="#595959" textLength="7.88" lengthAdjust="spacingAndGlyphs" xml:space="preserve">$</text>
<text x="494.57" y="695" font-family="Liberation Sans" font-size="14.5" font-weight="normal" font-style="normal" fill="#595959" textLength="63.64" lengthAdjust="spacingAndGlyphs" xml:space="preserve">1,600.00</text>
<text x="655.30" y="695" font-family="Liberation Sans" font-size="14.5" font-weight="normal" font-style="normal" fill="#262626" textLength="86.89" lengthAdjust="spacingAndGlyphs" xml:space="preserve">26/06/2023</text>
<text x="116.50" y="735" font-family="Liberation Sans" font-size="14.5" font-weight="normal" font-style="normal" fill="#595959" textLength="85.68" lengthAdjust="spacingAndGlyphs" xml:space="preserve">08/05/2023</text>
<text x="232.63" y="735" font-family="Liberation Sans" font-size="14.5" font-weight="normal" font-style="normal" fill="#595959" textLength="109.54" lengthAdjust="spacingAndGlyphs" xml:space="preserve">David's paycheck</text>
<text x="441.70" y="735" font-family="Liberation Sans" font-size="14.5" font-weight="normal" font-style="normal" fill="#595959" textLength="7.88" lengthAdjust="spacingAndGlyphs" xml:space="preserve">$</text>
<text x="494.57" y="735" font-family="Liberation Sans" font-size="14.5" font-weight="normal" font-style="normal" fill="#595959" textLength="63.64" lengthAdjust="spacingAndGlyphs" xml:space="preserve">1,500.00</text>
<text x="655.30" y="735" font-family="Liberation Sans" font-size="14.5" font-weight="normal" font-style="normal" fill="#595959" textLength="86.89" lengthAdjust="spacingAndGlyphs" xml:space="preserve">26/06/2023</text>
<text x="10.50" y="344.3" font-family="Liberation Sans" font-size="14" font-weight="normal" font-style="normal" fill="#ffffff" textLength="11.70" lengthAdjust="spacingAndGlyphs" xml:space="preserve">3</text>
<text x="12.00" y="384.3" font-family="Liberation Sans" font-size="14" font-weight="normal" font-style="normal" fill="#ffffff" textLength="8.77" lengthAdjust="spacingAndGlyphs" xml:space="preserve">4</text>
<text x="10.50" y="424.3" font-family="Liberation Sans" font-size="14" font-weight="normal" font-style="normal" fill="#ffffff" textLength="11.70" lengthAdjust="spacingAndGlyphs" xml:space="preserve">5</text>
<text x="10.50" y="464.3" font-family="Liberation Sans" font-size="14" font-weight="normal" font-style="normal" fill="#ffffff" textLength="11.70" lengthAdjust="spacingAndGlyphs" xml:space="preserve">6</text>
<text x="10.50" y="504.3" font-family="Liberation Sans" font-size="14" font-weight="normal" font-style="normal" fill="#ffffff" textLength="11.70" lengthAdjust="spacingAndGlyphs" xml:space="preserve">7</text>
<text x="12.00" y="544.3" font-family="Liberation Sans" font-size="14" font-weight="normal" font-style="normal" fill="#ffffff" textLength="10.02" lengthAdjust="spacingAndGlyphs" xml:space="preserve">8</text>
<text x="10.50" y="584.3" font-family="Liberation Sans" font-size="14" font-weight="normal" font-style="normal" fill="#ffffff" textLength="11.70" lengthAdjust="spacingAndGlyphs" xml:space="preserve">9</text>
<text x="7.50" y="624.3" font-family="Liberation Sans" font-size="14" font-weight="normal" font-style="normal" fill="#ffffff" textLength="18.69" lengthAdjust="spacingAndGlyphs" xml:space="preserve">10</text>
<text x="7.41" y="664.3" font-family="Liberation Sans" font-size="14" font-weight="normal" font-style="normal" fill="#ffffff" textLength="18.80" lengthAdjust="spacingAndGlyphs" xml:space="preserve">11</text>
<text x="7.50" y="704.3" font-family="Liberation Sans" font-size="14" font-weight="normal" font-style="normal" fill="#ffffff" textLength="18.69" lengthAdjust="spacingAndGlyphs" xml:space="preserve">12</text>
<text x="7.50" y="744.3" font-family="Liberation Sans" font-size="14" font-weight="normal" font-style="normal" fill="#ffffff" textLength="18.69" lengthAdjust="spacingAndGlyphs" xml:space="preserve">13</text>
<rect x="537" y="130" width="53.8" height="39.7" rx="2" fill="none" stroke="#ff0000" stroke-width="4"/>
<path d="M272.7 386.8L535 168" fill="none" stroke="#ff0000" stroke-width="4" stroke-linecap="round"/>
<path d="M552.7 153.3L523.6 160.9L541.3 180.5Z" fill="#ff0000" stroke="#ff0000" stroke-width="2" stroke-linejoin="round"/>
</svg></body></html>
